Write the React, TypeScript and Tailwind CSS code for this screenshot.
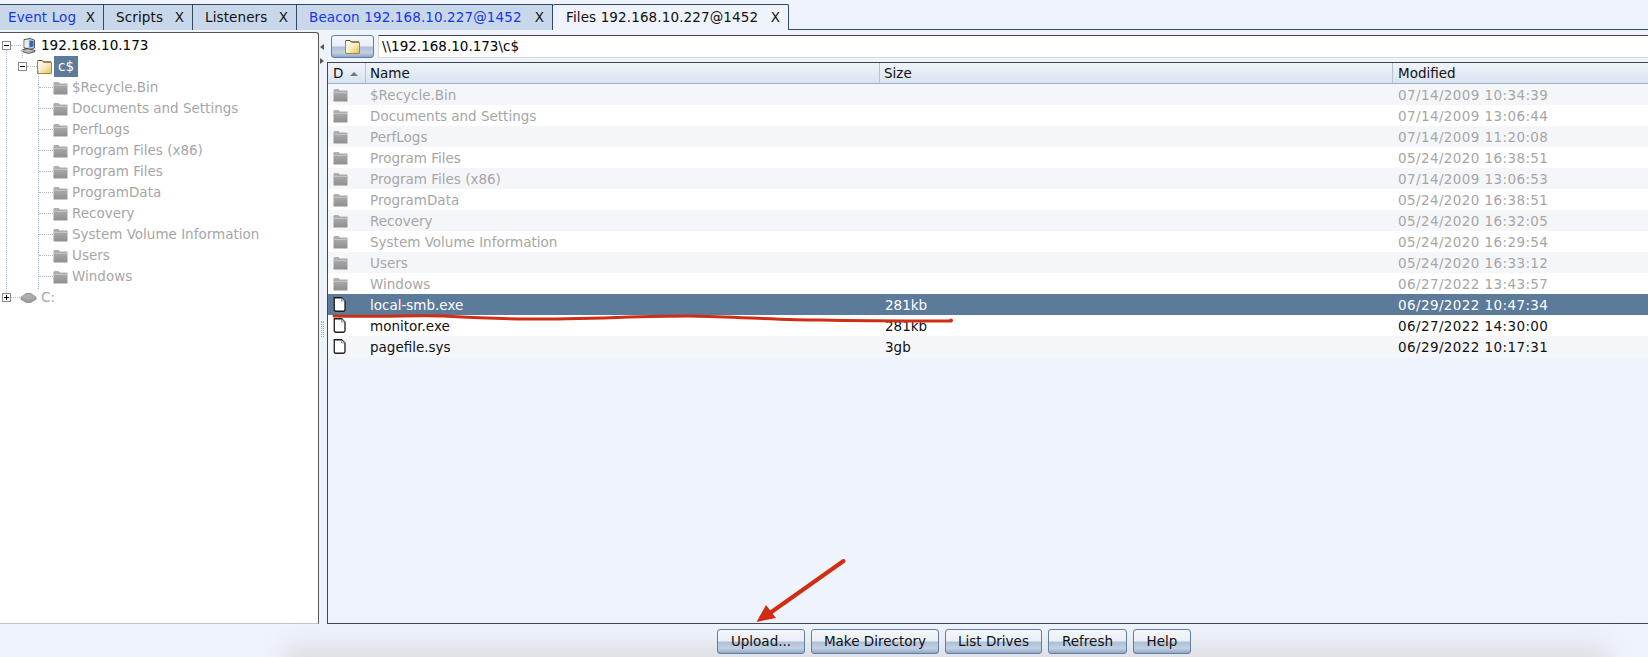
const font = "font-['DejaVu_Sans','Open_Sans',sans-serif]";

const FolderGray = () => (
  <svg width="15" height="14" viewBox="0 0 15 14" className="shrink-0">
    <defs>
      <linearGradient id="fg" x1="0" y1="0" x2="0" y2="1">
        <stop offset="0" stopColor="#b2b2b2" />
        <stop offset="1" stopColor="#8f8f8f" />
      </linearGradient>
    </defs>
    <path d="M0.5 2 Q0.5 1 1.5 1 L5.5 1 L7 2.5 L14 2.5 Q14.5 2.5 14.5 3 L14.5 13 Q14.5 13.5 14 13.5 L1 13.5 Q0.5 13.5 0.5 13 Z" fill="url(#fg)" />
    <rect x="0.5" y="4" width="14" height="1" fill="#c4c4c4" />
  </svg>
);

const FolderOpen = () => (
  <svg width="15" height="14" viewBox="0 0 15 14" className="shrink-0">
    <defs>
      <linearGradient id="fo" x1="0" y1="0" x2="1" y2="1">
        <stop offset="0" stopColor="#ffffff" />
        <stop offset="0.5" stopColor="#f8ecc4" />
        <stop offset="1" stopColor="#e8c052" />
      </linearGradient>
    </defs>
    <path d="M0.5 1.5 Q0.5 0.5 1.5 0.5 L5 0.5 L6.5 2 L14 2 Q14.5 2 14.5 2.5 L14.5 13.5 L0.5 13.5 Z" fill="url(#fo)" stroke="#a8873a" />
    <path d="M0.5 1.5 Q0.5 0.5 1.5 0.5 L5 0.5 L6.5 2 L14 2" fill="none" stroke="#5f4d24" />
  </svg>
);

const FileIcon = () => (
  <svg width="13" height="15" viewBox="0 0 13 15" className="shrink-0">
    <path d="M1.25 0.75 L8.5 0.75 L12 4 L12 12.5 Q12 14.25 10.25 14.25 L3 14.25 Q1.25 14.25 1.25 12.5 Z" fill="#fff" stroke="#1c1c1c" strokeWidth="1.3" />
    <path d="M8.5 1 L8.5 4 L12 4" fill="#d8d8d8" stroke="#666" strokeWidth="0.6" />
  </svg>
);

const Computer = () => (
  <svg width="15" height="16" viewBox="0 0 15 16" className="shrink-0">
    <path d="M3 1.5 L9 0.5 L13.5 2 L13.5 10 L9 11.5 L3 10 Z" fill="#cfcfcf" stroke="#333" strokeWidth="0.8" />
    <path d="M8.5 2.5 L12.5 3 L12.5 8.5 L8.5 9.5 Z" fill="#2f66c4" />
    <path d="M3.5 2.5 L7.5 2 L7.5 9.5 L3.5 9 Z" fill="#eeeeee" />
    <path d="M1 12 L7 10.5 L14 12.5 L14 13.5 L7.5 15.5 L1 13.5 Z" fill="#b8b8b8" stroke="#333" strokeWidth="0.8" />
  </svg>
);

const Drive = () => (
  <svg width="17" height="12" viewBox="0 0 17 12" className="shrink-0">
    <path d="M0.5 5 L6 1 L11 1 L16.5 5 L16.5 7.5 L11 11 L6 11 L0.5 7.5 Z" fill="#9c9c9c" />
    <path d="M1 5 L6 2 L11 2 L16 5 L11 7.5 L6 7.5 Z" fill="#acacac" />
  </svg>
);

const Expander = ({ plus }: { plus?: boolean }) => (
  <span className="relative z-10 w-[9px] h-[9px] border border-[#8a8a8a] bg-white flex items-center justify-center shrink-0">
    <span className="absolute w-[5px] h-px bg-black" />
    {plus && <span className="absolute w-px h-[5px] bg-black" />}
  </span>
);

const Dash = ({ w }: { w: string }) => (
  <span className={`${w} border-t border-dotted border-[#a9bad6] shrink-0`} />
);

const tabs = [
  { label: "Event Log", color: "text-[#1a35e8]", w: "w-[104px]", pl: "pl-[8px]" },
  { label: "Scripts", color: "text-[#111]", w: "w-[89px]", pl: "pl-[12px]" },
  { label: "Listeners", color: "text-[#111]", w: "w-[104px]", pl: "pl-[12px]" },
  { label: "Beacon 192.168.10.227@1452", color: "text-[#1a35e8]", w: "w-[256px]", pl: "pl-[12px]" },
];

const treeItems = [
  "$Recycle.Bin",
  "Documents and Settings",
  "PerfLogs",
  "Program Files (x86)",
  "Program Files",
  "ProgramData",
  "Recovery",
  "System Volume Information",
  "Users",
  "Windows",
];

const rows = [
  ["$Recycle.Bin", "", "07/14/2009 10:34:39"],
  ["Documents and Settings", "", "07/14/2009 13:06:44"],
  ["PerfLogs", "", "07/14/2009 11:20:08"],
  ["Program Files", "", "05/24/2020 16:38:51"],
  ["Program Files (x86)", "", "07/14/2009 13:06:53"],
  ["ProgramData", "", "05/24/2020 16:38:51"],
  ["Recovery", "", "05/24/2020 16:32:05"],
  ["System Volume Information", "", "05/24/2020 16:29:54"],
  ["Users", "", "05/24/2020 16:33:12"],
  ["Windows", "", "06/27/2022 13:43:57"],
  ["local-smb.exe", "281kb", "06/29/2022 10:47:34"],
  ["monitor.exe", "281kb", "06/27/2022 14:30:00"],
  ["pagefile.sys", "3gb", "06/29/2022 10:17:31"],
];

const headerBg = "bg-gradient-to-b from-[#f0f4f9] to-[#d8e3ef]";
const btnBg = "bg-[linear-gradient(to_bottom,#f4f7fb_0%,#e9eff7_48%,#aebfd6_52%,#c2d1e3_80%,#8ea8c6_100%)]";

const buttons = [
  ["Upload...", "w-[88px]"],
  ["Make Directory", "w-[128px]"],
  ["List Drives", "w-[97px]"],
  ["Refresh", "w-[79px]"],
  ["Help", "w-[58px]"],
];

export default function App() {
  return (
    <div className={`${font} relative w-[1648px] h-[657px] overflow-hidden bg-[#eff3fb] text-[13.5px] leading-none flex flex-col`}>
      {/* Tabs */}
      <div className="h-[30px] pt-[4px] flex items-stretch border-b border-[#2f4a66] shrink-0 tracking-[0.12px]">
        {tabs.map((t) => (
          <div key={t.label} className={`${t.w} ${t.pl} h-[26px] pt-px shrink-0 border-t border-r border-[#2f4a66] bg-[#c8d8ea] flex items-center justify-between pr-[8px]`}>
            <span className={t.color}>{t.label}</span>
            <span className="text-[#111]">X</span>
          </div>
        ))}
        <div className="w-[236px] h-[26px] shrink-0 border-t border-r border-[#2f4a66] bg-[#eff3fb] rounded-t-[2px] flex items-start justify-between pl-[13px] pr-[8px] pt-[6px] -mb-px z-10 relative">
          <span className="text-[#111]">Files 192.168.10.227@1452</span>
          <span className="text-[#111]">X</span>
        </div>
      </div>

      {/* Body */}
      <div className="flex flex-1 min-h-0 pt-[2px]">
        {/* Tree */}
        <div className="w-[319px] shrink-0 border-t border-r border-b border-t-[#555] border-r-[#555] border-b-[#c4c4c4] rounded-tr-[3px] bg-white pt-[2px] relative">
          <div className="h-[21px] flex items-center pl-[2px]">
            <Expander />
            <Dash w="w-[10px]" />
            <Computer />
            <span className="text-black ml-[5px] pt-px">192.168.10.173</span>
          </div>
          <div className="h-[21px] flex items-center pl-[18px]">
            <Expander />
            <Dash w="w-[10px]" />
            <FolderOpen />
            <span className="ml-[2px] bg-[#5c7a9a] text-white h-[21px] w-[24px] pl-[4px] pt-px flex items-center">c$</span>
          </div>
          {treeItems.map((t) => (
            <div key={t} className="h-[21px] flex items-center pl-[39px] text-[#a6a6a6]">
              <Dash w="w-[14px]" />
              <FolderGray />
              <span className="ml-[4px] pt-px">{t}</span>
            </div>
          ))}
          <div className="h-[21px] flex items-center pl-[2px] text-[#a6a6a6]">
            <Expander plus />
            <Dash w="w-[9px]" />
            <Drive />
            <span className="ml-[4px]">C:</span>
          </div>
          {/* tree guide lines */}
          <div className="absolute left-[6px] top-[17px] h-[243px] border-l border-dotted border-[#a9bad6]" />
          <div className="absolute left-[22px] top-[17px] h-[8px] border-l border-dotted border-[#a9bad6]" />
          <div className="absolute left-[38px] top-[38px] h-[218px] border-l border-dotted border-[#a9bad6]" />
        </div>

        {/* Splitter */}
        <div className="w-[8px] shrink-0 relative">
          <span className="absolute left-[1px] top-[12px] w-0 h-0 border-y-[3px] border-y-transparent border-r-[4px] border-r-[#555]" />
          <span className="absolute left-[1px] top-[26px] w-0 h-0 border-y-[3px] border-y-transparent border-l-[4px] border-l-[#555]" />
          <span className="absolute left-[2px] top-[289px] h-[16px] w-[3px] border-x border-dotted border-[#9aa8ba]" />
        </div>

        {/* Right */}
        <div className="flex-1 min-w-0 flex flex-col pt-[3px]">
          <div className="h-[23px] flex items-stretch shrink-0 mb-[4px]">
            <div className="w-[4px] shrink-0" />
            <div className={`w-[43px] border border-[#5f7fa3] rounded-[3px] ${btnBg} flex items-center justify-center`}>
              <FolderOpen />
            </div>
            <div className="flex-1 ml-[4px] bg-white border-t border-t-[#444] border-b border-b-[#d8d8d8] border-l border-l-[#d8d8d8] flex items-center pl-[3px] pt-px text-black">
              {"\\\\192.168.10.173\\c$"}
            </div>
          </div>
          <div className="flex-1 min-h-0 bg-[#eff3fb] border-t border-l border-b border-[#3f4650] flex flex-col">
            <div className={`h-[21px] flex items-stretch border-b border-[#9db4cf] text-[#111] shrink-0 ${headerBg}`}>
              <div className="w-[38px] border-r border-[#b3c4d9] flex items-center pl-[5px] pt-[2px] gap-[7px]">
                D
                <svg width="8" height="4" viewBox="0 0 8 4"><path d="M0 4 L4 0 L8 4 Z" fill="#777" /></svg>
              </div>
              <div className="w-[514px] border-r border-[#b3c4d9] flex items-center pl-[4px] pt-[2px]">Name</div>
              <div className="w-[513px] border-r border-[#b3c4d9] flex items-center pl-[4px] pt-[2px]">Size</div>
              <div className="flex-1 flex items-center pl-[5px] pt-[2px]">Modified</div>
            </div>
            {rows.map((r, i) => {
              const isFolder = i < 10;
              const sel = i === 10;
              return (
                <div
                  key={r[0]}
                  className={`h-[21px] flex items-center shrink-0 ${sel ? "bg-[#5c7a9a] text-white" : isFolder ? "text-[#a6a6a6]" : "text-[#111]"} ${!sel && i % 2 === 0 ? "bg-[#f5f6f9]" : ""} ${!sel && i % 2 === 1 ? "bg-white" : ""}`}
                >
                  <div className="w-[38px] pl-[5px] flex items-center">{isFolder ? <FolderGray /> : <FileIcon />}</div>
                  <div className="w-[514px] pl-[4px] pt-[2px]">{r[0]}</div>
                  <div className="w-[513px] pl-[5px] pt-[2px]">{r[1]}</div>
                  <div className="pl-[5px] pt-[2px] tracking-[0.4px]">{r[2]}</div>
                </div>
              );
            })}
          </div>
        </div>
      </div>

      {/* Bottom buttons */}
      <div className="h-[33px] shrink-0 relative flex items-start gap-[6px] pl-[717px] pt-[5px]">
        <div className="absolute left-[285px] right-[40px] bottom-[-16px] h-[26px] bg-[#d9dbdf] blur-[12px]" />
        {buttons.map(([b, w]) => (
          <div key={b} className={`${w} relative h-[25px] pt-px shrink-0 border border-[#5f7fa3] rounded-[3px] ${btnBg} flex items-center justify-center text-[#111]`}>
            {b}
          </div>
        ))}
      </div>

      {/* Red annotations */}
      <svg className="absolute inset-0 pointer-events-none" width="1648" height="657" viewBox="0 0 1648 657">
        <path d="M334 316 C380 317 420 315 443 316 C480 318 500 319 530 319 C590 319 640 316 690 316 C740 317 780 320 820 320 C860 321 900 321 950 321" fill="none" stroke="#cf2e14" strokeWidth="3" strokeLinecap="round" />
        <circle cx="951" cy="320.5" r="2" fill="#cf2e14" />
        <path d="M843.5 561 L770 613" stroke="#cf2e14" strokeWidth="4" strokeLinecap="round" />
        <path d="M756.5 622 L766 605 L776 618 Z" fill="#cf2e14" />
      </svg>
    </div>
  );
}
